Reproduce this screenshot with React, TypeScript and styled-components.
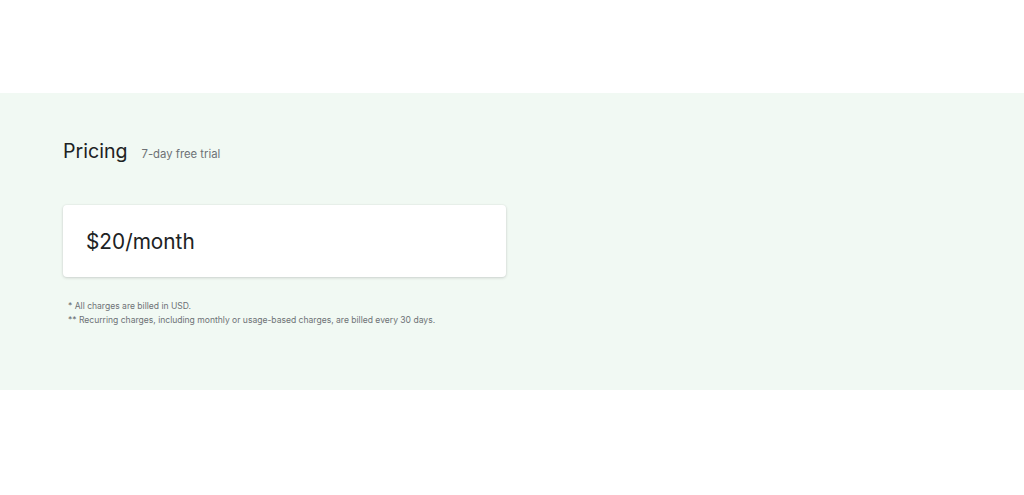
import React from 'react';
import styled, { createGlobalStyle } from 'styled-components';

const GlobalStyle = createGlobalStyle`
  body {
    margin: 0;
    background: #ffffff;
    font-family: 'Inter', 'Liberation Sans', sans-serif;
    color: #202223;
  }
`;

const Page = styled.div`
  padding-top: 93px;
  padding-bottom: 105px;
`;

const Band = styled.section`
  background: #f1f9f3;
  height: 297px;
  box-sizing: border-box;
  padding: 44px 63px 0;
`;

const Header = styled.div`
  display: flex;
  align-items: baseline;
  gap: 14px;
`;

const Title = styled.h2`
  margin: 0;
  font-size: 19.6px;
  font-weight: 400;
  line-height: 28px;
  color: #202223;
`;

const Trial = styled.span`
  font-size: 11.3px;
  color: #6d7175;
`;

const Card = styled.div`
  margin-top: 40px;
  width: 443px;
  height: 72px;
  box-sizing: border-box;
  background: #ffffff;
  border-radius: 4px;
  box-shadow: 0 1px 3px rgba(63, 63, 68, 0.2), 0 0 0 1px rgba(63, 63, 68, 0.02);
  display: flex;
  align-items: center;
  padding: 0 23px;
`;

const Price = styled.span`
  font-size: 20.8px;
  color: #202223;
`;

const Notes = styled.div`
  margin-top: 22px;
  padding-left: 5px;
  font-size: 8.55px;
  line-height: 14px;
  color: #6d7175;
`;

export default function App() {
  return (
    <>
      <GlobalStyle />
      <Page>
        <Band>
          <Header>
            <Title>Pricing</Title>
            <Trial>7-day free trial</Trial>
          </Header>
          <Card>
            <Price>$20/month</Price>
          </Card>
          <Notes>
            <div>* All charges are billed in USD.</div>
            <div>** Recurring charges, including monthly or usage-based charges, are billed every 30 days.</div>
          </Notes>
        </Band>
      </Page>
    </>
  );
}
